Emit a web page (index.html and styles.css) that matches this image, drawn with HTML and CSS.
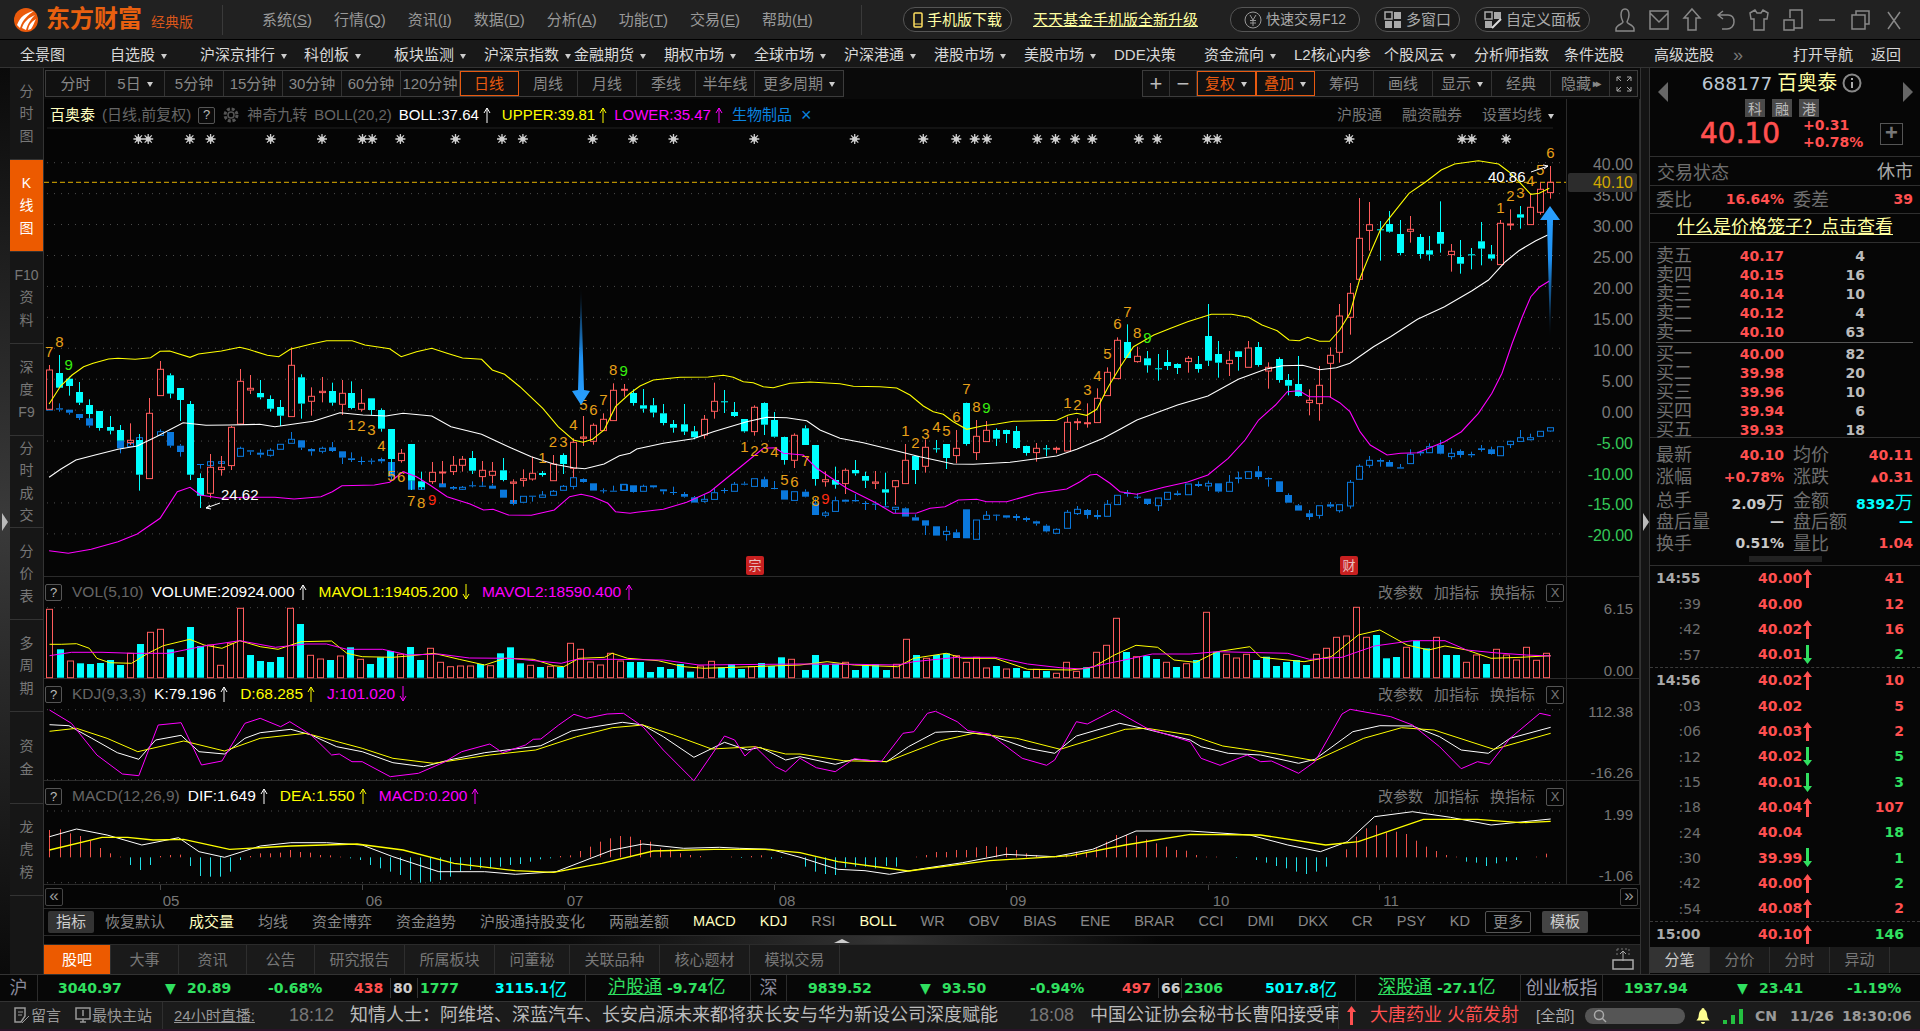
FILE: index.html
```html
<!DOCTYPE html>
<html lang="zh">
<head>
<meta charset="utf-8">
<title>东方财富 经典版</title>
<link rel="stylesheet" href="styles.css">
</head>
<body>
<svg class="defs" width="0" height="0">
  <symbol id="thin-up" viewBox="0 0 8 16"><path d="M4 16V1M1 6l3-5 3 5" fill="none" stroke="currentColor"/></symbol>
  <symbol id="thin-dn" viewBox="0 0 8 16"><path d="M4 0v15M1 10l3 5 3-5" fill="none" stroke="currentColor"/></symbol>
  <symbol id="tick-up" viewBox="0 0 9 19"><path d="M3 19V6H0L4.500 0 9 6H6v13z" fill="currentColor"/></symbol>
  <symbol id="tick-dn" viewBox="0 0 9 19"><path d="M3 0v13H0l4.500 6L9 13H6V0z" fill="currentColor"/></symbol>
</svg>

<header class="title">
  <div class="brand">
    <svg class="logo" viewBox="0 0 24 24"><circle cx="12" cy="12" r="12" fill="#ea5a0c"/><path d="M3 17C6 9 11 5 20 3 14 7 9 11 6 20zM8 20c2-6 6-10 13-13-4 4-7 8-9 15zM14 22c1-5 3-8 8-11-2 4-3 7-5 10z" fill="#fff"/></svg>
    <span class="brand-name">东方财富</span><span class="brand-ed">经典版</span>
  </div>
  <nav class="menu">
    <a>系统(<u>S</u>)</a><a>行情(<u>Q</u>)</a><a>资讯(<u>I</u>)</a><a>数据(<u>D</u>)</a><a>分析(<u>A</u>)</a><a>功能(<u>T</u>)</a><a>交易(<u>E</u>)</a><a>帮助(<u>H</u>)</a>
  </nav>
  <a class="pill pill-phone"><svg class="ic-phone" viewBox="0 0 10 16"><rect x="1" y="1" width="8" height="14" rx="1" fill="none" stroke="#ffe060" stroke-width="1.500"/><path d="M1 12h8" stroke="#ffe060"/></svg>手机版下载</a>
  <a class="promo">天天基金手机版全新升级</a>
  <a class="pill pill-trade"><svg class="ic-pill" viewBox="0 0 18 18"><circle cx="9" cy="9" r="8" fill="none" stroke="#999"/><path d="M6 4l3 5 3-5M9 9v6M6 9.500h6M6 12h6" fill="none" stroke="#999"/></svg>快速交易F12</a>
  <a class="pill pill-win"><svg class="ic-pill" viewBox="0 0 18 18" fill="#aaa"><rect x="1" y="1" width="7" height="7" fill="none" stroke="#aaa" stroke-width="1.500"/><rect x="10" y="1" width="7" height="7"/><rect x="1" y="10" width="7" height="7"/><rect x="10" y="10" width="7" height="7"/></svg>多窗口</a>
  <a class="pill pill-panel"><svg class="ic-pill" viewBox="0 0 18 18"><rect x="1" y="1" width="7" height="7" fill="none" stroke="#aaa" stroke-width="1.500"/><rect x="10" y="1" width="7" height="7" fill="#aaa"/><rect x="1" y="10" width="7" height="7" fill="#aaa"/><path d="M8 17l9-9" stroke="#ddd" stroke-width="2"/></svg>自定义面板</a>
  <div class="winbtns">
    <svg viewBox="0 0 22 26"><path d="M11 2c3 0 4 3 4 6s-1 5-2 7c0 2 7 3 7 7v2H2v-2c0-4 7-5 7-7-1-2-2-4-2-7s1-6 4-6z"/></svg>
    <svg viewBox="0 0 22 26"><path d="M2 4h18v18H2zM2 6l9 9 9-9"/></svg>
    <svg viewBox="0 0 22 26"><path d="M11 2l8 9h-4v12H7V11H3z"/></svg>
    <svg viewBox="0 0 22 26"><path d="M8 4L3 8l5 4M3 8h10c4 0 6 3 6 7s-3 7-7 7H7"/></svg>
    <svg viewBox="0 0 22 26"><path d="M7 3L2 6l1 6h3v11h10V12h3l1-6-5-3-2 3H9z"/></svg>
    <svg viewBox="0 0 22 26"><path d="M8 11V3h12v18h-8M2 13h10v10H2z"/></svg>
    <svg viewBox="0 0 22 26"><path d="M3 13h16"/></svg>
    <svg viewBox="0 0 22 26"><path d="M7 8V4h13v13h-4M3 8h13v14H3z"/></svg>
    <svg viewBox="0 0 22 26"><path d="M5 5l12 17M17 5L5 22"/></svg>
  </div>
</header>

<nav class="navbar">
  <a>全景图</a><a>自选股<i></i></a><a class="wide">沪深京排行<i></i></a><a>科创板<i></i></a><a>板块监测<i></i></a><a>沪深京指数<i></i></a><a>金融期货<i></i></a><a>期权市场<i></i></a><a>全球市场<i></i></a><a>沪深港通<i></i></a><a>港股市场<i></i></a><a>美股市场<i></i></a><a>DDE决策</a><a>资金流向<i></i></a><a>L2核心内参</a><a>个股风云<i></i></a><a>分析师指数</a><a>条件选股</a><a class="adv">高级选股</a><a class="more">»</a><a class="open">打开导航</a><a class="back">返回</a>
</nav>

<main class="workspace">
  <aside class="side">
    <div class="strip"><span class="grip"></span></div>
    <div class="sidetabs">
      <a><span>分<br>时<br>图</span></a><a class="on"><span>K<br>线<br>图</span></a><a><span>F10<br>资<br>料</span></a><a><span>深<br>度<br>F9</span></a><a><span>分<br>时<br>成<br>交</span></a><a><span>分<br>价<br>表</span></a><a><span>多<br>周<br>期</span></a><a><span>资<br>金</span></a><a><span>龙<br>虎<br>榜</span></a>
    </div>
  </aside>

  <section class="center">
    <div class="periodbar">
      <div class="pgroup">
        <a class="p1">分时</a><a>5日<i></i></a><a>5分钟</a><a>15分钟</a><a>30分钟</a><a>60分钟</a><a>120分钟</a><a class="act">日线</a><a>周线</a><a>月线</a><a>季线</a><a>半年线</a><a class="pmore">更多周期<i></i></a>
      </div>
      <div class="pgroup pright">
        <a class="sq">+</a><a class="sq">−</a><a class="act">复权<i></i></a><a class="act">叠加<i></i></a><a>筹码</a><a>画线</a><a>显示<i></i></a><a>经典</a><a>隐藏 <b class="dbl">▸▸</b></a>
        <a class="sq"><svg class="ic-expand" viewBox="0 0 16 16"><path d="M1 5V1h4M11 1h4v4M15 11v4h-4M5 15H1v-4M1 1l4 4M15 1l-4 4M15 15l-4-4M1 15l4-4" fill="none" stroke="#aaa"/></svg></a>
      </div>
    </div>

    <div class="panel panel-main">
      <svg id="chart-main" class="plot" viewBox="44 99 1596 478" width="1596" height="478"></svg>
      <div class="legend legend-main">
        <span class="stock">百奥泰</span><span class="mut">(日线,前复权)</span><span class="qbox">?</span>
        <svg class="ic-gear" viewBox="0 0 18 18"><circle cx="9" cy="9" r="6" fill="none" stroke="#555" stroke-width="3" stroke-dasharray="3 1.700"/><circle cx="9" cy="9" r="3" fill="none" stroke="#555" stroke-width="1.500"/></svg>
        <span class="mut">神奇九转</span><span class="mut">BOLL(20,2)</span>
        <span class="wh">BOLL:37.64<svg class="ar"><use href="#thin-up"/></svg></span>
        <span class="ye">UPPER:39.81<svg class="ar"><use href="#thin-up"/></svg></span>
        <span class="ma">LOWER:35.47<svg class="ar"><use href="#thin-up"/></svg></span>
        <span class="bl">生物制品</span><span class="bl bx">×</span>
        <span class="legend-tools"><a>沪股通</a><a>融资融券</a><a>设置均线<i></i></a></span>
      </div>
      <span class="mark mark-a">宗</span><span class="mark mark-b">财</span>
      <span class="price-tag">40.10</span>
    </div>

    <div class="panel panel-sub">
      <svg id="chart-vol" class="plot" viewBox="44 577 1596 102" width="1596" height="102"></svg>
      <div class="legend legend-sub">
        <span class="qbox">?</span><span class="mut">VOL(5,10)</span>
        <span class="wh">VOLUME:20924.000<svg class="ar"><use href="#thin-up"/></svg></span>
        <span class="ye">MAVOL1:19405.200<svg class="ar"><use href="#thin-dn"/></svg></span>
        <span class="ma">MAVOL2:18590.400<svg class="ar"><use href="#thin-up"/></svg></span>
        <span class="legend-tools"><a>改参数</a><a>加指标</a><a>换指标</a><b class="xbox">X</b></span>
      </div>
    </div>
    <div class="panel panel-sub">
      <svg id="chart-kdj" class="plot" viewBox="44 679 1596 102" width="1596" height="102"></svg>
      <div class="legend legend-sub">
        <span class="qbox">?</span><span class="mut">KDJ(9,3,3)</span>
        <span class="wh">K:79.196<svg class="ar"><use href="#thin-up"/></svg></span>
        <span class="ye">D:68.285<svg class="ar"><use href="#thin-up"/></svg></span>
        <span class="ma">J:101.020<svg class="ar"><use href="#thin-dn"/></svg></span>
        <span class="legend-tools"><a>改参数</a><a>加指标</a><a>换指标</a><b class="xbox">X</b></span>
      </div>
    </div>
    <div class="panel panel-macd">
      <svg id="chart-macd" class="plot" viewBox="44 781 1596 104" width="1596" height="104"></svg>
      <div class="legend legend-sub">
        <span class="qbox">?</span><span class="mut">MACD(12,26,9)</span>
        <span class="wh">DIF:1.649<svg class="ar"><use href="#thin-up"/></svg></span>
        <span class="ye">DEA:1.550<svg class="ar"><use href="#thin-up"/></svg></span>
        <span class="ma">MACD:0.200<svg class="ar"><use href="#thin-up"/></svg></span>
        <span class="legend-tools"><a>改参数</a><a>加指标</a><a>换指标</a><b class="xbox">X</b></span>
      </div>
    </div>

    <div class="panel panel-axis">
      <svg id="chart-axis" class="plot" viewBox="44 885 1596 24" width="1596" height="24"></svg>
      <a class="scroll scroll-l">«</a><a class="scroll scroll-r">»</a>
    </div>

    <div class="indicators">
      <a class="ind-on">指标</a><a>恢复默认</a><a class="hl">成交量</a><a>均线</a><a>资金博弈</a><a>资金趋势</a><a>沪股通持股变化</a><a>两融差额</a><a class="hl lat">MACD</a><a class="hl lat">KDJ</a><a class="lat">RSI</a><a class="hl lat">BOLL</a><a class="lat">WR</a><a class="lat">OBV</a><a class="lat">BIAS</a><a class="lat">ENE</a><a class="lat">BRAR</a><a class="lat">CCI</a><a class="lat">DMI</a><a class="lat">DKX</a><a class="lat">CR</a><a class="lat">PSY</a><a class="lat">KD</a><a class="ind-more">更多</a><a class="ind-tpl">模板</a>
    </div>
    <div class="handle"><span></span></div>
    <div class="tabs">
      <a class="on t67">股吧</a><a class="t68">大事</a><a class="t68">资讯</a><a class="t68">公告</a><a class="t90">研究报告</a><a class="t90">所属板块</a><a class="t75">问董秘</a><a class="t90">关联品种</a><a class="t90">核心题材</a><a class="t90">模拟交易</a>
      <svg class="ic-export" viewBox="0 0 22 22"><path d="M5 1h12v8M5 1v8" fill="none" stroke="#777" stroke-dasharray="2 2"/><path d="M11 13V3M8 6l3-3 3 3" fill="none" stroke="#aaa"/><rect x="1" y="12" width="20" height="9" fill="none" stroke="#aaa" stroke-width="1.500"/></svg>
    </div>
  </section>

  <div class="divider"><span class="grip"></span></div>

  <aside class="quote">
    <div class="q-head">
      <span class="tri tri-l"></span><span class="tri tri-r"></span>
      <div class="q-name"><span class="q-code">688177</span><span class="q-stock">百奥泰</span><svg class="ic-info" viewBox="0 0 20 20"><circle cx="10" cy="10" r="8.500" fill="none" stroke="#888" stroke-width="2"/><path d="M10 5v2M10 9v6" stroke="#aaa" stroke-width="2"/></svg></div>
      <div class="q-tags"><b>科</b><b>融</b><b>港</b></div>
      <div class="q-price"><span class="q-big">40.10</span><span class="q-chg">+0.31<br>+0.78%</span><span class="q-add">+</span></div>
    </div>
    <div class="q-state"><span class="lbl">交易状态</span><span class="rest">休市</span></div>
    <div class="q-ratio statrow"><span class="lbl">委比</span><b class="r">16.64%</b><span class="lbl l2">委差</span><b class="r">39</b></div>
    <a class="q-link">什么是价格笼子？点击查看</a>
    <div class="book">
      <div class="brow"><span class="lbl">卖五</span><b class="r">40.17</b><b>4</b></div>
      <div class="brow"><span class="lbl">卖四</span><b class="r">40.15</b><b>16</b></div>
      <div class="brow"><span class="lbl">卖三</span><b class="r">40.14</b><b>10</b></div>
      <div class="brow"><span class="lbl">卖二</span><b class="r">40.12</b><b>4</b></div>
      <div class="brow"><span class="lbl">卖一</span><b class="r">40.10</b><b>63</b></div>
      <hr class="book-sep">
      <div class="brow"><span class="lbl">买一</span><b class="r">40.00</b><b>82</b></div>
      <div class="brow"><span class="lbl">买二</span><b class="r">39.98</b><b>20</b></div>
      <div class="brow"><span class="lbl">买三</span><b class="r">39.96</b><b>10</b></div>
      <div class="brow"><span class="lbl">买四</span><b class="r">39.94</b><b>6</b></div>
      <div class="brow"><span class="lbl">买五</span><b class="r">39.93</b><b>18</b></div>
    </div>
    <div class="stats">
      <div class="statrow"><span class="lbl">最新</span><b class="r">40.10</b><span class="lbl l2">均价</span><b class="r">40.11</b></div>
      <div class="statrow"><span class="lbl">涨幅</span><b class="r">+0.78%</b><span class="lbl l2">涨跌</span><b class="r"><small>▲</small>0.31</b></div>
      <div class="statrow"><span class="lbl">总手</span><b class="g">2.09<em>万</em></b><span class="lbl l2">金额</span><b class="cy">8392<em>万</em></b></div>
      <div class="statrow"><span class="lbl lw">盘后量</span><b class="g">—</b><span class="lbl l2 lw">盘后额</span><b class="cy">—</b></div>
      <div class="statrow"><span class="lbl">换手</span><b class="g">0.51%</b><span class="lbl l2">量比</span><b class="r">1.04</b></div>
    </div>
    <div class="q-grip"><span></span></div>
    <div class="ticks">
      <div class="tgroup">
        <div class="trow"><b class="tm">14:55</b><b class="r">40.00<svg class="ta r"><use href="#tick-up"/></svg></b><b class="r v">41</b></div>
        <div class="trow"><span class="ts">:39</span><b class="r">40.00</b><b class="r v">12</b></div>
        <div class="trow"><span class="ts">:42</span><b class="r">40.02<svg class="ta r"><use href="#tick-up"/></svg></b><b class="r v">16</b></div>
        <div class="trow"><span class="ts">:57</span><b class="r">40.01<svg class="ta gn"><use href="#tick-dn"/></svg></b><b class="gn v">2</b></div>
      </div>
      <div class="tgroup">
        <div class="trow"><b class="tm">14:56</b><b class="r">40.02<svg class="ta r"><use href="#tick-up"/></svg></b><b class="r v">10</b></div>
        <div class="trow"><span class="ts">:03</span><b class="r">40.02</b><b class="r v">5</b></div>
        <div class="trow"><span class="ts">:06</span><b class="r">40.03<svg class="ta r"><use href="#tick-up"/></svg></b><b class="r v">2</b></div>
        <div class="trow"><span class="ts">:12</span><b class="r">40.02<svg class="ta gn"><use href="#tick-dn"/></svg></b><b class="gn v">5</b></div>
        <div class="trow"><span class="ts">:15</span><b class="r">40.01<svg class="ta gn"><use href="#tick-dn"/></svg></b><b class="gn v">3</b></div>
        <div class="trow"><span class="ts">:18</span><b class="r">40.04<svg class="ta r"><use href="#tick-up"/></svg></b><b class="r v">107</b></div>
        <div class="trow"><span class="ts">:24</span><b class="r">40.04</b><b class="gn v">18</b></div>
        <div class="trow"><span class="ts">:30</span><b class="r">39.99<svg class="ta gn"><use href="#tick-dn"/></svg></b><b class="gn v">1</b></div>
        <div class="trow"><span class="ts">:42</span><b class="r">40.00<svg class="ta r"><use href="#tick-up"/></svg></b><b class="gn v">2</b></div>
        <div class="trow"><span class="ts">:54</span><b class="r">40.08<svg class="ta r"><use href="#tick-up"/></svg></b><b class="r v">2</b></div>
      </div>
      <div class="tgroup tlast">
        <div class="trow"><b class="tm">15:00</b><b class="r">40.10<svg class="ta r"><use href="#tick-up"/></svg></b><b class="gn v">146</b></div>
      </div>
    </div>
    <div class="q-tabs"><a class="on">分笔</a><a>分价</a><a>分时</a><a>异动</a></div>
  </aside>
</main>

<div class="indexbar">
  <span class="ix-name">沪</span>
  <b class="ix-price g1">3040.97</b><b class="ix-arrow">▼</b><b class="ix-chg">20.89</b><b class="ix-pct">-0.68%</b>
  <b class="ix-up">438</b><b class="ix-flat">80</b><b class="ix-dn">1777</b><b class="ix-amt">3115.1<em>亿</em></b>
  <span class="ix-tong"><u>沪股通</u> <b>-9.74</b>亿</span>
  <span class="ix-name n2">深</span>
  <b class="ix-price g2">9839.52</b><b class="ix-arrow">▼</b><b class="ix-chg c2">93.50</b><b class="ix-pct p2">-0.94%</b>
  <b class="ix-up">497</b><b class="ix-flat f2">66</b><b class="ix-dn d2">2306</b><b class="ix-amt">5017.8<em>亿</em></b>
  <span class="ix-tong"><u>深股通</u> <b>-27.1</b>亿</span>
  <span class="ix-name n3">创业板指</span>
  <b class="ix-price g3">1937.94</b><b class="ix-arrow">▼</b><b class="ix-chg c2">23.41</b><b class="ix-pct">-1.19%</b>
</div>

<footer class="status">
  <a class="st-tool"><svg viewBox="0 0 16 18"><path d="M1 1h10v8L7 15H1z" fill="none" stroke="#999" stroke-width="1.500"/><path d="M4 5h5M4 8h4M8 16l7-7" stroke="#999"/></svg>留言</a>
  <a class="st-tool st-tool2"><svg viewBox="0 0 16 18"><rect x="1" y="1" width="14" height="11" fill="none" stroke="#999" stroke-width="1.500"/><path d="M8 3v6M5 15h6M8 12v3" stroke="#999" stroke-width="1.500"/></svg>最快主站</a>
  <a class="st-live">24小时直播:</a>
  <span class="st-time">18:12</span><span class="st-news n-a">知情人士：阿维塔、深蓝汽车、长安启源未来都将获长安与华为新设公司深度赋能</span>
  <span class="st-time">18:08</span><span class="st-news n-b">中国公证协会秘书长曹阳接受审</span>
  <span class="st-alert"><svg class="ta"><use href="#tick-up"/></svg>大唐药业 火箭发射</span>
  <a class="st-all">[全部]</a>
  <span class="st-search"><svg viewBox="0 0 14 14"><circle cx="6" cy="6" r="4.500" fill="none" stroke="#aaa" stroke-width="1.500"/><path d="M9 9l4 4" stroke="#aaa" stroke-width="1.500"/></svg></span>
  <svg class="st-bell" viewBox="0 0 16 16"><path d="M8 0c1 0 1.500 1 1.500 1.500C12 3 12 6 12.500 9c.300 2 2 3 2 3.500H1.500C1.500 12 3.200 11 3.500 9 4 6 4 3 6.500 1.500 6.500 1 7 0 8 0zM6 14h4c0 1-1 2-2 2s-2-1-2-2z" fill="#ffff90"/></svg>
  <svg class="st-signal" viewBox="0 0 21 16" fill="#24c040"><rect x="0" y="12" width="4" height="4"/><rect x="8" y="7" width="4" height="9"/><rect x="16" y="1" width="4" height="15"/></svg>
  <b class="st-clock c1">CN</b><b class="st-clock c2">11/26</b><b class="st-clock c3">18:30:06</b>
</footer>
<script src="chart.js"></script>
</body>
</html>
```

FILE: styles.css
```css
* { box-sizing: border-box; }
html, body { margin: 0; height: 1031px; overflow: hidden; }
body {
  width: 1920px;
  background: #2a1428;
  color: #aaa;
  font: 15px/1.2 "Liberation Sans", "Noto Sans CJK SC", sans-serif;
}
a { color: inherit; text-decoration: none; }
.defs { position: absolute; }

/* title bar */
.title { height: 40px; background: #212121; display: flex; align-items: center; border-bottom: 1px solid #000; }
.brand { width: 223px; display: flex; align-items: center; padding-left: 14px; height: 30px; border-right: 1px solid #3a3a3a; }
.logo { width: 24px; height: 24px; }
.brand-name { margin-left: 8px; font-size: 24px; font-weight: 700; color: #e9600f; letter-spacing: 0; }
.brand-ed { margin-left: 9px; font-size: 14px; color: #d9561a; margin-top: 6px; }
.menu { width: 639px; height: 30px; display: flex; gap: 22px; align-items: center; padding-left: 39px; color: #999; border-right: 1px solid #3a3a3a; }
.pill { height: 25px; border: 1px solid #555; border-radius: 12px; display: flex; align-items: center; justify-content: center; gap: 4px; color: #aaa; background: #1b1b1b; }
.pill-phone { width: 109px; margin-left: 41px; color: #ffffa8; }
.ic-phone { width: 10px; height: 16px; }
.ic-pill { width: 18px; height: 18px; }
.promo { width: 165px; margin-left: 21px; color: #ffffa0; text-decoration: underline; white-space: nowrap; }
.pill-trade { width: 130px; margin-left: 32px; font-size: 14px; }
.pill-win { width: 85px; margin-left: 15px; }
.pill-panel { width: 115px; margin-left: 15px; }
.winbtns { display: flex; margin-left: 24px; gap: 11.600px; }
.winbtns svg { width: 22px; height: 26px; fill: none; stroke: #888; stroke-width: 1.500; }

/* nav */
.navbar { height: 28px; background: #181818; display: flex; align-items: center; padding: 3px 0 0 20px; color: #d8d8d8; border-bottom: 1px solid #333; white-space: nowrap; }
.navbar a { flex: 0 0 90px; }
.navbar a.wide { flex-basis: 104px; }
.navbar a.adv { flex-basis: 79px; }
.navbar a.more { flex-basis: 60px; color: #777; font-size: 18px; line-height: 18px; }
.navbar a.open { flex-basis: 78px; }
i { display: inline-block; width: 0; height: 0; margin-left: 6px; vertical-align: middle; border: 3px solid transparent; border-top: 5px solid #ccc; border-bottom: 0; }

/* workspace */
.workspace { height: 906px; display: flex; background: #050505; }
.side { width: 44px; display: flex; border-right: 1px solid #333; }
.strip, .divider { width: 10px; background: linear-gradient(#0a0a0a, #3a3a3a 50%, #0a0a0a); position: relative; flex: none; }
.divider { background: #141414; border-left: 1px solid #333; border-right: 1px solid #333; }
.grip { position: absolute; left: 2px; top: 445px; width: 0; height: 0; border-left: 6px solid #bbb; border-top: 9px solid transparent; border-bottom: 9px solid transparent; }
.sidetabs { flex: 1; background: #161616; }
.sidetabs a { height: 92px; display: flex; align-items: center; justify-content: center; text-align: center; font-size: 14px; line-height: 22.500px; color: #777; border-bottom: 1px solid #333; }
.sidetabs a.on { background: #ec5a00; color: #fff; }

.center { width: 1596px; display: flex; flex-direction: column; }
.periodbar { height: 31px; display: flex; justify-content: space-between; padding: 2px 2px 2px 1px; background: #0a0a0a; }
.pgroup { display: flex; border: 1px solid #3c3c3c; background: #111; height: 27px; }
.pgroup a { width: 59px; display: flex; align-items: center; justify-content: center; padding-top: 1px; color: #888; border-right: 1px solid #333; white-space: nowrap; font-size: 15px; }
.pgroup a:last-child { border-right: 0; }
.pgroup a.p1 { width: 60px; }
.pgroup a.pmore { width: 88px; }
.pgroup a.act { color: #e85a10; outline: 1px solid #e85a10; outline-offset: -1px; }
.pgroup a.sq { width: 27px; color: #bbb; font-size: 22px; }
.dbl { font-size: 10px; margin-left: 2px; letter-spacing: -2px; }
.ic-expand { width: 16px; height: 16px; }

.panel { position: relative; border-bottom: 1px solid #2b2b2b; flex: none; }
.panel-main { height: 478px; }
.panel-sub { height: 102px; }
.panel-macd { height: 104px; }
.panel-axis { height: 24px; }
.plot { display: block; position: absolute; left: 0; top: 0; overflow: visible; }
.legend { position: absolute; left: 1px; right: 76px; display: flex; align-items: center; white-space: nowrap; }
.legend-main { top: 7px; left: 6px; gap: 7px; right: 86px; height: 18px; }
.legend-sub { top: 6px; gap: 8px; height: 19px; font-size: 15.500px; }
.legend-sub .qbox { margin-right: 2px; }
.legend-sub .legend-tools { font-size: 15px; }
.qbox { width: 17px; height: 17px; border: 1px solid #555; border-radius: 2px; display: inline-flex; align-items: center; justify-content: center; color: #bbb; font-size: 13px; background: #0a0a0a; }
.mut { color: #666; }
.wh { color: #fff; }
.ye { color: #ff0; margin-left: 4px; }
.ma { color: #f0f; margin-left: 4px; }
.legend-main .ma { margin-left: 0; }
.bl { color: #0a84e0; }
.legend-main .bl { margin-left: 2px; }
.bx { font-size: 18px; line-height: 16px; }
.stock { color: #ffffc0; }
.ar { width: 8px; height: 16px; margin-left: 4px; vertical-align: -3px; }
.ic-gear { width: 18px; height: 18px; }
.legend-tools { margin-left: auto; display: flex; align-items: center; gap: 11px; color: #777; }
.legend-main .legend-tools { gap: 20px; }
.xbox { width: 18px; height: 18px; border: 1px solid #555; border-radius: 2px; display: flex; align-items: center; justify-content: center; color: #777; font-weight: 400; font-size: 13px; }
.mark { position: absolute; top: 457px; width: 18px; height: 19px; background: #c82020; border-radius: 2px; color: #e8c0c0; font-size: 13px; text-align: center; line-height: 19px; }
.mark-a { left: 702px; }
.mark-b { left: 1296px; }
.price-tag { position: absolute; left: 1524px; top: 74px; width: 69px; height: 19px; background: #2c2c2c; color: #d4a800; font-size: 16px; line-height: 19px; text-align: right; padding-right: 4px; border-radius: 2px; }

.scroll { position: absolute; top: 3px; width: 18px; height: 18px; border: 1px solid #444; border-radius: 2px; color: #999; font-size: 17px; line-height: 14px; text-align: center; }
.scroll-l { left: 1px; }
.scroll-r { right: 2px; }

.indicators { height: 27px; display: flex; align-items: center; gap: 24px; padding-left: 4px; color: #888; white-space: nowrap; border-bottom: 1px solid #2b2b2b; }
.indicators a { flex: none; }
.indicators .lat { font-size: 14.500px; }
.indicators .ind-on { width: 46px; height: 22px; margin-right: -13px; background: #333; color: #ccc; text-align: center; line-height: 22px; border-radius: 2px; }
.indicators .hl { color: #ffffc0; }
.indicators .ind-more { width: 46px; height: 22px; margin-left: -9px; margin-right: -13px; border: 1px solid #555; text-align: center; line-height: 20px; border-radius: 2px; }
.indicators .ind-tpl { width: 46px; height: 22px; background: #444; color: #ccc; text-align: center; line-height: 22px; border-radius: 2px; }
.handle { height: 9px; display: flex; justify-content: center; align-items: flex-end; background: linear-gradient(90deg, #050505 30%, #333 53%, #050505 70%); border-bottom: 1px solid #2b2b2b; }
.handle span { width: 0; height: 0; border: 8px solid transparent; border-top: 0; border-bottom: 4px solid #ccc; margin-bottom: 1px; }
.tabs { height: 29px; display: flex; background: #1a1a1a; color: #777; position: relative; }
.tabs a { display: flex; align-items: center; justify-content: center; border-right: 1px solid #2e2e2e; }
.tabs .t67 { width: 67px; } .tabs .t68 { width: 68px; } .tabs .t75 { width: 75px; } .tabs .t90 { width: 90px; }
.tabs a.on { background: #ec5a00; color: #fff; }
.ic-export { width: 22px; height: 22px; margin-left: auto; margin-right: 6px; margin-top: 3px; }

/* quote panel */
.quote { width: 270px; background: #060606; display: flex; flex-direction: column; color: #bbb; }
.quote b { font-family: "DejaVu Sans", "Noto Sans CJK SC", sans-serif; font-size: 14px; }
.r { color: #ff5050; } .g { color: #c8c8c8; } .cy { color: #0ff; } .gn { color: #30e060; }
.lbl { font-size: 18px; color: #6e6e6e; line-height: 20px; white-space: nowrap; }
.q-head { height: 89px; position: relative; border-bottom: 1px solid #2f2f2f; text-align: center; }
.tri { position: absolute; top: 14px; width: 0; height: 0; border-top: 10px solid transparent; border-bottom: 10px solid transparent; }
.tri-l { left: 8px; border-right: 10px solid #666; }
.tri-r { right: 7px; border-left: 10px solid #666; }
.q-name { display: flex; justify-content: center; align-items: center; height: 30px; padding-right: 6px; }
.q-code { font: 18.500px "DejaVu Sans", sans-serif; color: #bcc8d4; }
.q-stock { font-size: 20px; color: #ffffa0; margin: 0 5px; }
.ic-info { width: 20px; height: 20px; }
.q-tags { display: flex; justify-content: center; gap: 7px; height: 19px; padding: 1px 6px 0 0; }
.q-tags b { font: 14px/18px "Noto Sans CJK SC", sans-serif; width: 20px; height: 18px; background: #4a4a4a; color: #bbb; }
.q-price { display: flex; align-items: flex-start; height: 37px; padding-left: 50px; text-align: left; }
.q-big { font: 28px/34px "DejaVu Sans", sans-serif; -webkit-text-stroke: .6px #ff5050; color: #ff5050; width: 103px; }
.quote .q-chg { font: 700 14px/17px "DejaVu Sans", sans-serif; color: #ff5050; width: 77px; }
.q-add { width: 23px; height: 22px; margin-top: 6px; border: 1px solid #555; color: #777; font-size: 22px; line-height: 18px; text-align: center; font-weight: 700; }
.q-state { height: 29px; display: flex; justify-content: space-between; align-items: center; padding: 3px 7px 0 7px; border-bottom: 1px solid #2f2f2f; }
.rest { font-size: 18px; color: #aaa; }
.statrow { display: grid; grid-template-columns: 54px 74px 9px 50px 70px; align-items: center; padding-left: 6px; }
.statrow .lbl { grid-column: 1; overflow: visible; }
.statrow .l2 { grid-column: 4; }
.statrow > b { text-align: right; }
.statrow em { font: 18px "Noto Sans CJK SC", sans-serif; }
.statrow small { font-size: 10px; vertical-align: 1px; }
.q-ratio { height: 28px; border-bottom: 1px solid #2f2f2f; }
.q-link { height: 29px; display: block; text-align: center; font-size: 18px; line-height: 27px; color: #ffffa0; text-decoration: underline; border-bottom: 1px solid #2f2f2f; }
.book { height: 195px; padding-top: 3px; border-bottom: 1px solid #2f2f2f; }
.brow { display: grid; grid-template-columns: 50px 78px 81px; height: 19px; align-items: center; padding-left: 6px; }
.brow b { text-align: right; }
.book-sep { border: 0; border-top: 1px solid #555; margin: 1px 7px 1px 6px; height: 0; }
.stats { height: 118px; padding-top: 6px; }
.stats .statrow { height: 22.200px; }
.q-grip { height: 10px; border-bottom: 1px solid #2f2f2f; display: flex; justify-content: center; align-items: flex-start; }
.q-grip span { width: 73px; height: 6px; background: #222; }
.ticks { height: 381px; }
.tgroup { border-bottom: 1px dashed #3a3a3a; }
.tlast { border-bottom: 0; }
.trow { display: grid; grid-template-columns: 45px 57px 60px 86px; height: 25.300px; align-items: center; padding-left: 6px; }
.trow > :nth-child(2) { grid-column: 3; display: flex; align-items: center; white-space: nowrap; }
.trow .v { text-align: right; }
.quote b.tm { color: #aaa; }
.ts { font: 14px "DejaVu Sans", sans-serif; color: #6e6e6e; text-align: right; }
.ta { width: 9px; height: 19px; margin-left: 1px; flex: none; }
.q-tabs { height: 26px; display: flex; background: #1a1a1a; color: #777; }
.q-tabs a { width: 60px; text-align: center; line-height: 26px; border-right: 1px solid #2e2e2e; }
.q-tabs a.on { background: #333; color: #ccc; }

/* index bar */
.indexbar { height: 28px; background: #070707; border-top: 1px solid #333; border-bottom: 1px solid #333; display: flex; align-items: center; white-space: nowrap; }
.indexbar b { font: 700 14px "DejaVu Sans", sans-serif; flex: none; color: #30e060; }
.ix-name { font-size: 18px; color: #889; text-align: center; width: 38px; height: 26px; line-height: 26px; flex: none; border-right: 1px solid #2c2c2c; }
.ix-name.n2 { width: 37px; border-left: 1px solid #2c2c2c; }
.ix-name.n3 { width: 83px; border-left: 1px solid #2c2c2c; color: #99a; }
.indexbar .ix-price { width: 107px; margin-left: 20px; }
.indexbar .ix-price.g2 { width: 112px; margin-left: 21px; }
.indexbar .ix-price.g3 { width: 113px; margin-left: 21px; }
.ix-arrow { width: 22px; }
.ix-chg { width: 81px; }
.ix-chg.c2 { width: 88px; }
.ix-pct { width: 86px; }
.ix-pct.p2 { width: 92px; }
.indexbar .ix-up { width: 36px; color: #ff5050; }
.indexbar .ix-flat { width: 28px; color: #ccc; border-left: 1px solid #333; border-right: 1px solid #333; padding-left: 2px; margin-right: 2px; height: 20px; line-height: 20px; }
.indexbar .f2 { width: 24px; }
.ix-dn { width: 75px; }
.ix-dn.d2 { width: 81px; }
.indexbar .ix-amt { width: 91px; color: #0ff; border-right: 1px solid #2c2c2c; height: 26px; display: flex; align-items: center; }
.indexbar em { font: 18px/1 "Noto Sans CJK SC", sans-serif; }
.ix-tong { width: 164px; padding-left: 22px; color: #30e060; font-size: 18px; flex: none; }
.indexbar .ix-tong b { font-size: 14px; }

/* status bar */
.status { height: 27px; background: #1b1b1b; display: flex; align-items: center; white-space: nowrap; color: #999; font-size: 15px; }
.st-tool { display: flex; align-items: center; margin-left: 14px; gap: 1px; }
.st-tool svg { width: 16px; height: 18px; }
.st-tool2 { width: 88px; height: 27px; border-right: 1px solid #2f2f2f; }
.st-live { margin-left: 11px; width: 115px; text-decoration: underline; }
.st-time { font-size: 18px; color: #777; flex: none; width: 61px; }
.st-news { font-size: 18px; color: #bbb; overflow: hidden; flex: none; }
.n-a { width: 679px; }
.n-b { width: 249px; height: 27px; line-height: 27px; border-right: 1px solid #2f2f2f; }
.st-alert { width: 197px; padding-left: 7px; color: #ff5050; font-size: 18px; display: flex; align-items: center; flex: none; gap: 14px; }
.st-all { width: 49px; color: #aaa; }
.st-search { width: 100px; height: 16px; background: #555; border-radius: 8px; padding: 1px 8px; flex: none; }
.st-search svg { width: 14px; height: 14px; display: block; }
.st-bell { width: 16px; height: 16px; margin-left: 10px; flex: none; }
.st-signal { width: 21px; height: 16px; margin-left: 12px; flex: none; }
.st-clock { font: 700 14px "DejaVu Sans", sans-serif; color: #999; flex: none; }
.st-clock.c1 { margin-left: 11px; }
.st-clock.c2 { margin-left: 13px; }
.st-clock.c3 { margin-left: 8px; }

/* chart text */
.axis { font: 16px "Liberation Sans", sans-serif; fill: #7a7a7a; text-anchor: end; }
.axis-g { fill: #34c858; }
.axis-k { font: 15px "Liberation Sans", sans-serif; fill: #777; text-anchor: end; }
.td { font: 15px "Liberation Sans", sans-serif; text-anchor: middle; fill: #e8a018; }
.td-g { fill: #38f010; }
.td-r { fill: #ff2a10; }
.note { font: 15px "Liberation Sans", sans-serif; fill: #fff; }
.month { font: 15px "Liberation Sans", sans-serif; fill: #777; text-anchor: middle; }
```

FILE: chart.js
```javascript
(function () {
  var X7 = function (z) { return 30 + z / 2.613; };
  var X8 = function (z) { return 620 + z / 3; };
  var X9 = function (z) { return 1120 + z / 2.958; };
  var Y7 = function (z) { return 280 + z / 3; };
  var Y9 = function (z) { return 130 + z / 3; };
  var XA = function (z) { return z / 1.96; };
  var XB = function (z) { return 800 + z / 1.845; };
  var YS = function (z) { return 570 + z / 3; };

  var RED = '#ff5c5c', CY = '#00ffff', BL = '#0a78dc', YE = '#ffff00', MA = '#ff00ff', WH = '#ffffff';

  /* [x, high, top, bottom, low, isRed] */
  var C1 = [[50,255,270,388,390,1],[77,225,279,323,323,0],[103,290,296,318,347,0],[129,306,336,368,375,0],[155,358,375,402,415,0],[181,393,393,444,452,0],[208,408,441,452,463,0],[234,435,450,482,482,0],[260,430,481,488,495,1],[286,462,480,584,632,0],[312,354,400,596,596,1],[339,243,268,347,347,1],[365,280,286,341,355,0],[392,324,324,360,423,0],[419,363,372,584,600,0],[445,580,594,647,684,0],[471,522,562,640,655,1],[498,528,562,569,587,1],[524,438,442,557,570,1],[550,267,304,432,434,1],[576,285,325,330,342,1],[602,300,339,352,358,0],[628,346,357,386,395,0],[654,360,381,407,438,0],[681,202,256,410,410,1],[709,283,292,371,416,0],[735,322,349,364,407,1],[762,291,334,338,367,1],[788,308,333,368,377,0],[814,300,340,373,405,1],[840,304,339,384,388,0],[866,327,370,388,395,1],[892,355,355,390,405,0],[918,385,390,446,455,0],[944,447,447,537,580,0],[970,507,520,542,548,1],[996,492,492,602,630,0],[1022,575,604,622,628,0],[1051,546,577,605,612,1],[1077,543,576,578,612,1],[1104,528,556,575,585,1],[1130,528,538,556,575,1],[1156,513,534,572,582,0],[1182,543,571,590,605,1],[1208,546,574,586,610,1],[1235,534,571,600,604,0],[1261,598,606,610,668,1],[1287,568,596,601,620,1],[1313,530,580,597,602,1],[1339,573,579,585,590,0],[1366,525,552,602,602,1],[1394,520,525,552,582,0],[1420,475,487,565,592,1],[1446,408,471,475,498,1],[1472,430,436,484,494,1],[1498,400,418,452,452,1],[1524,310,331,422,422,1],[1551,312,328,328,350,1]];
  var C2 = [[40,328,339,369,377,0],[70,327,376,386,398,0],[100,354,376,398,412,0],[130,372,400,429,436,0],[160,420,432,443,458,0],[193,372,433,455,465,0],[223,438,454,472,478,0],[253,405,418,465,476,1],[283,308,364,394,416,1],[313,330,364,365,399,0],[343,366,396,408,411,0],[373,417,417,454,458,0],[403,376,382,455,467,1],[433,367,369,434,465,0],[463,396,420,470,473,0],[493,470,471,540,554,0],[523,460,466,541,564,1],[556,436,445,495,495,0],[586,495,495,597,617,0],[616,574,599,605,620,1],[646,560,600,614,626,0],[676,565,571,611,642,1],[706,540,570,580,587,0],[736,575,588,602,624,0],[766,573,606,610,627,1],[796,578,628,638,675,0],[826,600,602,620,675,1],[856,492,541,611,611,1],[886,528,528,570,612,0],[916,478,502,559,578,1],[949,480,505,507,518,0],[979,492,492,534,567,0],[1009,450,505,527,550,1],[1039,368,369,492,497,0],[1069,420,469,518,540,1],[1099,423,451,485,485,1],[1129,445,450,476,498,0],[1159,449,450,462,489,0],[1189,438,453,504,507,0],[1219,497,498,519,527,0],[1249,489,505,518,545,1],[1279,495,505,507,529,0],[1309,500,505,508,520,1],[1342,410,427,513,513,1],[1372,415,425,428,450,1],[1402,370,428,430,443,1],[1432,325,355,428,428,1],[1462,262,277,347,347,1],[1492,172,181,296,296,1]];
  var C3 = [[22,583,636,684,684,0],[51,650,679,695,698,1],[81,663,685,706,728,0],[111,672,715,716,752,0],[140,660,696,708,720,0],[170,700,702,714,732,0],[202,678,685,695,728,1],[232,678,702,717,728,0],[261,522,618,692,708,0],[291,633,672,698,743,0],[321,663,691,701,738,1],[350,663,664,681,722,0],[380,633,654,712,712,1],[409,636,651,705,710,0],[439,697,712,723,776,1],[469,682,687,750,758,0],[498,732,750,767,796,0],[528,678,762,798,800,0],[558,778,811,818,856,1],[590,708,766,821,872,1],[620,652,676,700,802,1],[649,522,558,667,698,1],[679,459,490,562,614,1],[708,204,325,448,448,1],[738,216,284,301,362,1],[768,273,298,299,392,0],[797,243,282,305,308,0],[827,270,312,369,376,0],[857,258,298,304,338,1],[886,312,321,372,386,0],[914,318,361,374,392,0],[948,214,306,341,368,0],[978,342,364,374,425,1],[1007,330,381,401,431,0],[1037,354,373,375,418,0],[1067,276,334,356,406,0],[1096,345,373,386,392,0],[1125,270,280,404,404,1],[1155,238,282,284,300,1],[1184,228,253,263,296,0],[1214,190,232,284,284,1],[1243,157,178,247,254,1],[1273,108,157,188,206,1]];

  /* lower blue candles: [x, high, top, bottom, low, filled] */
  var B1 = [[50,388,388,392,392,1],[77,370,385,389,395,1],[103,389,389,398,404,1],[129,402,402,414,420,1],[155,415,415,437,443,1],[234,482,482,505,520,1],[260,490,490,500,500,0],[286,473,473,482,482,0],[339,448,455,466,466,0],[365,456,456,497,503,1],[392,492,497,516,530,1],[445,552,552,555,566,1],[471,545,545,556,556,0],[498,545,545,550,550,0],[550,500,505,529,529,0],[576,511,511,515,525,1],[602,508,518,524,533,1],[628,505,511,526,530,0],[654,493,493,508,508,0],[681,456,478,490,490,0],[709,481,481,503,510,1],[735,505,507,514,527,1],[762,500,505,514,520,0],[788,486,502,513,516,1],[814,514,514,533,552,1],[840,517,535,540,546,1],[866,530,543,545,554,1],[892,535,542,545,553,1],[918,533,537,544,550,1],[944,546,546,590,602,1],[996,602,602,629,629,1],[1022,618,618,628,628,0],[1077,610,610,622,622,1],[1104,618,621,626,630,1],[1130,618,622,628,630,0],[1156,604,616,618,622,1],[1182,603,617,619,621,1],[1208,612,617,626,626,1],[1235,629,629,653,653,1],[1261,655,660,672,676,1],[1287,649,649,667,667,0],[1313,647,647,650,665,1],[1339,633,645,652,652,0],[1366,630,634,646,646,0],[1394,615,619,631,631,0],[1420,593,593,619,628,0],[1446,595,597,606,608,1],[1472,610,610,632,632,1],[1498,625,631,633,640,1],[1524,617,632,634,634,1],[1551,614,614,631,631,0]];
  var B2 = [[10,613,613,631,631,0],[40,616,616,636,638,1],[70,614,619,634,634,0],[100,616,616,622,625,1],[130,628,628,634,643,1],[160,620,636,638,645,1],[193,636,642,650,653,1],[223,648,652,668,668,1],[253,645,658,664,668,0],[283,625,638,658,658,0],[313,624,630,632,640,1],[343,606,613,634,634,0],[373,605,611,614,616,1],[403,596,596,619,619,0],[433,590,598,621,623,1],[463,603,624,626,628,1],[493,631,631,659,659,1],[523,635,635,661,661,0],[556,628,635,650,652,1],[586,655,670,705,705,1],[616,693,699,706,712,0],[646,650,662,694,694,0],[676,658,659,665,665,1],[706,642,660,664,666,1],[736,663,669,672,690,1],[766,664,671,673,690,1],[796,650,679,681,681,1],[826,682,682,688,699,0],[856,682,685,710,710,1],[886,703,712,722,722,1],[916,721,721,737,765,1],[949,739,739,767,767,1],[979,738,754,764,782,0],[1009,748,757,774,774,1],[1039,688,688,775,775,1],[1069,720,720,778,778,0],[1099,693,706,718,718,0],[1129,703,704,706,722,1],[1159,706,706,713,715,1],[1189,702,708,714,722,1],[1219,710,714,720,725,1],[1249,722,724,731,737,1],[1279,733,737,754,757,1],[1309,745,748,760,760,0],[1342,690,697,745,745,0],[1372,678,688,701,705,0],[1402,687,690,705,716,1],[1432,690,705,711,718,1],[1462,660,673,709,709,0],[1492,646,646,674,674,0]];
  var B3 = [[22,1080,1088,1092,1100,1],[51,1090,1100,1102,1107,1],[81,1106,1106,1122,1125,1],[111,1104,1104,1127,1143,0],[140,1087,1087,1108,1108,0],[170,1082,1090,1095,1097,1],[202,1062,1062,1094,1094,0],[232,1054,1062,1068,1071,1],[261,1052,1060,1068,1083,0],[291,1060,1060,1085,1088,1],[321,1035,1057,1084,1084,0],[350,1025,1042,1047,1060,1],[380,1025,1025,1045,1045,0],[409,1008,1024,1041,1048,1],[439,1042,1044,1048,1070,1],[469,1054,1054,1086,1086,1],[498,1090,1095,1118,1118,1],[528,1122,1126,1142,1142,1],[558,1140,1150,1161,1170,1],[590,1127,1127,1156,1166,0],[620,1116,1123,1130,1134,1],[649,1124,1124,1142,1148,0],[679,1050,1057,1128,1136,0],[708,1003,1009,1048,1048,0],[738,978,991,1006,1013,0],[768,985,990,995,1010,1],[797,990,996,1010,1010,1],[827,1002,1012,1016,1016,1],[857,958,973,1001,1001,0],[886,962,965,970,977,1],[914,940,950,968,968,0],[948,930,945,971,973,1],[978,955,970,980,988,0],[1007,958,963,975,983,1],[1037,965,972,976,982,1],[1067,945,955,960,965,1],[1096,950,958,972,974,1],[1125,950,950,977,977,0],[1155,934,934,944,954,0],[1184,900,923,934,934,0],[1214,911,923,929,931,0],[1243,904,904,919,919,0],[1273,893,893,903,905,0]];

  var UP = [[[50,372],[80,318],[110,285],[140,260],[165,250],[205,237],[230,235],[275,238],[315,233],[340,214],[365,213],[418,232],[440,222],[500,213],[548,202],[570,208],[620,226],[650,230],[680,208],[735,192],[775,182],[842,182],[875,195],[940,206],[970,230],[1010,215],[1050,205],[1090,220],[1130,234],[1180,238],[1208,270],[1240,283],[1280,320],[1340,385],[1380,440],[1420,480],[1445,487],[1470,478],[1500,450],[1530,380],[1568,340]],
    [[60,318],[100,300],[150,295],[180,292],[265,291],[310,286],[340,292],[370,305],[400,308],[430,320],[460,323],[510,310],[570,306],[660,311],[700,319],[780,320],[830,324],[870,345],[910,378],[940,395],[970,403],[1000,425],[1040,448],[1090,437],[1130,432],[1180,424],[1310,421],[1345,405],[1370,400],[1400,406],[1430,388],[1465,320],[1500,262]],
    [[40,650],[100,615],[150,595],[200,575],[270,553],[330,553],[380,562],[420,585],[465,602],[500,630],[530,632],[555,622],[590,634],[620,634],[650,600],[680,550],[710,445],[740,370],[770,300],[800,260],[855,190],[905,155],[950,120],[990,102],[1060,92],[1120,102],[1150,125],[1185,160],[1215,193],[1240,190],[1270,175]]];
  var MID = [[[50,592],[80,568],[120,540],[170,525],[230,508],[280,498],[330,470],[400,428],[460,436],[520,435],[600,433],[640,440],[740,424],[810,398],[870,405],[930,408],[975,400],[1050,408],[1100,440],[1180,463],[1250,500],[1310,530],[1370,553],[1420,563],[1450,566],[1500,552],[1540,527],[1568,520]],
    [[50,507],[130,490],[220,476],[280,455],[380,425],[440,412],[500,413],[560,422],[600,450],[660,475],[730,488],[840,515],[900,530],[1000,552],[1060,553],[1170,547],[1310,528],[1370,508],[1450,475],[1500,448]],
    [[50,870],[170,825],[260,798],[350,748],[430,718],[480,707],[540,706],[590,719],[640,713],[680,700],[750,650],[800,620],[880,568],[960,530],[1040,483],[1090,450],[1140,395],[1180,362],[1230,332],[1265,315]]];
  var LOW = [[[50,812],[100,820],[160,808],[230,785],[280,762],[340,715],[385,635],[418,622],[445,645],[500,655],[560,652],[640,652],[690,657],[760,650],[790,635],[815,617],[900,615],[940,607],[975,575],[1010,590],[1045,615],[1090,650],[1150,672],[1185,690],[1210,688],[1250,705],[1310,706],[1370,690],[1410,650],[1440,643],[1470,650],[1510,670],[1530,695],[1568,700]],
    [[50,697],[130,688],[200,667],[270,635],[350,570],[430,505],[465,503],[490,520],[550,525],[590,565],[680,625],[770,670],[820,700],[890,699],[930,685],[975,680],[1015,660],[1070,658],[1100,665],[1160,665],[1250,640],[1340,627],[1380,605],[1410,585],[1430,583],[1470,610],[1500,635]],
    [[50,1093],[130,1072],[200,1056],[260,1035],[320,985],[370,930],[410,870],[460,825],[495,785],[530,782],[560,800],[620,800],[650,818],[680,845],[710,905],[740,945],[790,975],[830,970],[880,968],[960,935],[1010,905],[1060,850],[1100,790],[1130,730],[1160,640],[1190,560],[1215,500],[1240,472],[1270,453]]];

  function line(sections, color, w) {
    var last = -1, pts = [];
    sections.forEach(function (s) {
      s.pts.forEach(function (p) {
        var x = s.fx(p[0]), y = s.fy(p[1]);
        if (x > last) { pts.push(x.toFixed(1) + ',' + y.toFixed(1)); last = x; }
      });
    });
    return '<polyline points="' + pts.join(' ') + '" fill="none" stroke="' + color + '" stroke-width="' + (w || 1.1) + '"/>';
  }
  function three(a, color) {
    return line([{ pts: a[0], fx: X7, fy: Y7 }, { pts: a[1], fx: X8, fy: Y7 }, { pts: a[2], fx: X9, fy: Y9 }], color);
  }
  function grid(y, x2) {
    return '<line x1="47" x2="' + (x2 || 1566) + '" y1="' + y + '" y2="' + y + '" stroke="#4e4e4e" stroke-dasharray="1 6"/>';
  }
  function axisText(y, t, cls) {
    return '<text class="' + cls + '" x="1633" y="' + y + '">' + t + '</text>';
  }
  function wick(x, y1, y2, col) {
    return '<line x1="' + x + '" x2="' + x + '" y1="' + y1 + '" y2="' + y2 + '" stroke="' + col + '"/>';
  }
  function candle(c, fx, fy, blue) {
    var x = Math.round(fx(c[0])) + 0.5, hi = fy(c[1]), t = fy(c[2]), b = fy(c[3]), lo = fy(c[4]);
    var col = blue ? BL : (c[5] ? RED : CY);
    var solid = blue ? c[5] : !c[5];
    var s = '';
    if (t > hi) s += wick(x, hi, t, col);
    if (lo > b) s += wick(x, b, lo, col);
    var h = Math.max(b - t, 1);
    if (solid) s += '<rect x="' + (x - 3.5) + '" y="' + t.toFixed(1) + '" width="7" height="' + h.toFixed(1) + '" fill="' + col + '"/>';
    else s += '<rect x="' + (x - 3) + '" y="' + t.toFixed(1) + '" width="6" height="' + h.toFixed(1) + '" fill="none" stroke="' + col + '"/>';
    return s;
  }

  /* main chart */
  var m = '';
  m += '<line x1="47" x2="1553" y1="128" y2="128" stroke="#222"/>';
  for (var k = 0; k <= 12; k++) m += grid(162.7 + 30.93 * k);
  m += '<line x1="44" x2="1566" y1="182.3" y2="182.3" stroke="#e0b000" stroke-dasharray="5 3"/>';
  m += '<line x1="1566.5" x2="1566.5" y1="99" y2="577" stroke="#2b2b2b"/>';
  m += '<line x1="1639.5" x2="1639.5" y1="99" y2="885" stroke="#2b2b2b"/>';
  B1.forEach(function (c) { m += candle(c, X7, Y7, true); });
  B2.forEach(function (c) { m += candle(c, X8, Y7, true); });
  B3.forEach(function (c) { m += candle(c, X9, Y9, true); });
  C1.forEach(function (c) { m += candle(c, X7, Y7); });
  C2.forEach(function (c) { m += candle(c, X8, Y7); });
  C3.forEach(function (c) { m += candle(c, X9, Y9); });
  m += three(UP, YE) + three(MID, WH) + three(LOW, MA);

  /* event stars along the top of the plot */
  var stars = '';
  [113,121,155,172,221,263,296,304,327,372,410,427,484,517,550,616,698,754,781,796,806,847,862,878,892,930,945,986,994,1102,1194,1202,1230].forEach(function (s) {
    var x = (s * 1.2245).toFixed(1), y = 139;
    stars += 'M' + (x - 5) + ' ' + y + 'h10M' + x + ' ' + (y - 5) + 'v10M' + (x - 3.6) + ' ' + (y - 3.6) + 'l7.2 7.2M' + (x - 3.6) + ' ' + (y + 3.6) + 'l7.2-7.2';
    m += '<circle cx="' + x + '" cy="' + y + '" r="2.600" fill="#cfcfcf"/>';
  });
  m += '<path d="' + stars + '" stroke="#cfcfcf" stroke-width="1.300"/>';

  function td(x, y, t, c) {
    return '<text class="td' + (c ? ' td-' + c : '') + '" x="' + x.toFixed(1) + '" y="' + (y + 5.5).toFixed(1) + '">' + t + '</text>';
  }
  [[50,214,7],[77,185,8],[101,254,9,'g'],[840,432,1],[866,436,2],[892,447,3],[918,495,4],[944,587,5],[970,590,6],[996,660,7],[1022,668,8],[1051,658,9,'r'],[1339,532,1],[1366,485,2],[1394,485,3],[1420,432,4],[1446,372,5],[1472,388,6],[1498,358,7],[1524,268,8],[1551,270,9,'g']].forEach(function (d) {
    m += td(X7(d[0]), Y7(d[1]), d[2], d[3]);
  });
  [[373,500,1],[403,510,2],[433,503,3],[463,515,4],[493,597,5],[523,604,6],[556,540,7],[586,660,8],[616,656,9,'r'],[856,452,1],[886,488,2],[916,461,3],[949,440,4],[979,452,5],[1009,410,6],[1039,325,7],[1069,380,8],[1099,382,9,'g'],[1342,368,1],[1372,374,2],[1402,328,3],[1432,285,4],[1462,220,5],[1492,130,6]].forEach(function (d) {
    m += td(X8(d[0]), Y7(d[1]), d[2], d[3]);
  });
  [[22,543,7],[51,607,8],[81,622,9,'g'],[1125,232,1],[1155,197,2],[1184,187,3],[1214,150,4],[1243,118,5],[1273,68,6]].forEach(function (d) {
    m += td(X9(d[0]), Y9(d[1]), d[2], d[3]);
  });

  m += '<defs><linearGradient id="ga" x1="0" x2="0" y1="0" y2="1"><stop offset="0" stop-color="#1e90f0" stop-opacity="0"/><stop offset=".6" stop-color="#1e90f0"/><stop offset="1" stop-color="#2aa0ff"/></linearGradient>' +
    '<linearGradient id="gb" x1="0" x2="0" y1="1" y2="0"><stop offset="0" stop-color="#1e90f0" stop-opacity="0"/><stop offset=".6" stop-color="#1e90f0"/><stop offset="1" stop-color="#2aa0ff"/></linearGradient></defs>';
  m += '<path d="M581 287l3 103 6 1-9 14-9-14 6-1z" fill="url(#ga)"/>';
  m += '<path d="M1550 338l-3-118-7 0 10-14 10 14-7 0z" fill="url(#gb)"/>';
  m += '<text class="note" x="221" y="500">24.62</text><path d="M220 503l-14 5M206 508l5 1M206 508l4-3" stroke="#fff" fill="none"/>';
  m += '<text class="note" x="1488" y="182">40.86</text><path d="M1531 172l17-6M1548 166l-5-1M1548 166l-4 3" stroke="#fff" fill="none"/>';

  [[40,164],[35,195],[30,226],[25,257],[20,288],[15,319],[10,350],[5,381],[0,412],[-5,443],[-10,474],[-15,504],[-20,535]].forEach(function (a) {
    var v = a[0].toFixed(2);
    m += axisText(a[1] + 6, v, a[0] < 0 ? 'axis axis-g' : 'axis');
  });
  document.getElementById('chart-main').innerHTML = m;

  /* volume */
  var V1 = [118,-238,273,-280,-282,-279,-270,-285,250,-222,187,178,-238,-261,-171,-228,225,286,220,115,-255,-273,-276,-261,115,-162,256,267,-270,258,-232,268,-282,-262,-243,253,-231,-270,235,277,290,288,288,-282,287,-250,-232,-280,286,-291,289,-291,220,238,276,285,250,273,-276,-276,-306,-291,-297,-282,-305,288,274,-292,-282,-297,290,-279,-288,-262,268];
  var V2 = [-300,-255,-285,-281,277,-300,-285,-283,-300,283,208,-255,265,-255,-250,257,277,262,294,-288,297,-294,-303,298,-303,310,277,304,-292,247,226,145,-246,260,-258,-267,277,-291,281,-270,127,-245,253,264,253,-270,-260,-288,-276,-270,-285,253,235,202,198,112,202,-195,-265,-261,232,-212,-235,202,-255,-255,277,255,-282,238,255,270,232,271,250];
  var v = '';
  v += grid(607.7, 1566);
  function bar(x, top) {
    var col = top > 0 ? RED : CY, y = YS(Math.abs(top)), h = 677.7 - y;
    x = Math.round(x);
    if (top > 0) return '<rect x="' + (x - 2.5) + '" y="' + y.toFixed(1) + '" width="6" height="' + h.toFixed(1) + '" fill="none" stroke="' + col + '"/>';
    return '<rect x="' + (x - 3) + '" y="' + y.toFixed(1) + '" width="7" height="' + h.toFixed(1) + '" fill="' + col + '"/>';
  }
  V1.forEach(function (t, i) { v += bar(XA(97 + 19.63 * i), t); });
  V2.forEach(function (t, i) { v += bar(XB(10 + 18.47 * i), t); });
  function two(a, b, color, w) {
    return line([{ pts: a, fx: XA, fy: YS }, { pts: b, fx: XB, fy: YS }], color, w || 1);
  }
  v += two([[97,223],[120,223],[150,221],[175,235],[190,265],[215,278],[258,280],[290,250],[320,227],[372,208],[400,225],[435,235],[470,212],[510,230],[545,238],[590,215],[650,213],[680,250],[710,260],[770,262],[800,258],[850,250],[900,268],[950,285],[990,265],[1045,268],[1085,287],[1105,290],[1135,265],[1185,262],[1200,250],[1230,265],[1290,272],[1340,290],[1380,295],[1568,285]],
    [[50,275],[100,285],[180,290],[210,265],[270,250],[300,265],[360,265],[420,298],[500,300],[540,292],[580,255],[620,226],[660,232],[690,270],[730,277],[770,245],[830,230],[850,262],[930,275],[980,260],[1030,195],[1070,180],[1120,225],[1160,240],[1190,228],[1230,240],[1275,265],[1330,262],[1385,257]], YE);
  v += two([[97,257],[140,247],[200,247],[260,250],[330,250],[400,228],[470,212],[540,232],[600,222],[640,222],[680,238],[750,238],[800,255],[860,252],[920,264],[1000,265],[1100,280],[1130,268],[1200,268],[1300,270],[1370,285],[1568,282]],
    [[100,283],[180,285],[210,275],[290,262],[360,262],[420,282],[480,293],[520,297],[570,280],[650,252],[720,252],[770,245],[900,250],[940,268],[1000,262],[1060,228],[1130,212],[1190,212],[1230,240],[1280,248],[1340,255],[1385,258]], MA);
  v += '<line x1="1566.5" x2="1566.5" y1="577" y2="679" stroke="#2b2b2b"/>';
  v += axisText(614, '6.15', 'axis-k') + axisText(676, '0.00', 'axis-k');
  document.getElementById('chart-vol').innerHTML = v;

  /* KDJ */
  var K = grid(709.7, 1566) + grid(779.7, 1566);
  K += two([[97,464],[135,467],[180,505],[230,548],[272,568],[305,510],[355,496],[390,545],[440,552],[480,505],[510,488],[570,478],[610,495],[660,530],[710,545],[770,578],[830,590],[880,570],[950,548],[1060,527],[1120,483],[1160,472],[1220,457],[1260,465],[1300,500],[1360,562],[1420,517],[1465,540],[1490,532],[1540,570],[1568,560]],
    [[65,583],[100,568],[160,575],[200,530],[250,487],[290,484],[350,495],[420,535],[470,550],[510,498],[590,460],[640,478],[720,510],[740,530],[790,550],[850,555],[920,580],[950,568],[1020,485],[1070,467],[1130,468],[1180,500],[1220,540],[1270,550],[1310,505],[1385,472]], WH);
  K += two([[97,484],[150,475],[210,505],[270,545],[360,513],[440,543],[510,505],[600,490],[710,535],[770,565],[850,580],[960,555],[1050,540],[1130,500],[1200,473],[1260,465],[1320,495],[1395,537],[1480,530],[1540,552],[1568,552]],
    [[80,572],[160,575],[260,512],[320,490],[400,505],[480,538],[600,478],[640,475],[720,495],[780,528],[880,552],[950,572],[1040,505],[1110,473],[1170,480],[1280,538],[1385,490]], YE);
  K += two([[97,420],[140,460],[190,555],[240,612],[272,617],[310,465],[355,458],[395,585],[435,573],[480,460],[510,445],[550,470],[568,455],[610,495],[650,555],[665,552],[690,575],[710,575],[765,620],[820,610],[870,577],[905,545],[960,522],[985,548],[1030,525],[1045,508],[1060,507],[1095,465],[1125,433],[1150,445],[1190,432],[1222,430],[1260,470],[1300,540],[1360,632],[1420,498],[1440,510],[1460,558],[1480,530],[1520,590],[1540,605],[1568,565]],
    [[30,593],[65,605],[100,566],[150,575],[190,490],[210,485],[235,430],[250,424],[290,455],[310,482],[350,492],[410,565],[455,586],[470,570],[510,455],[530,462],[580,420],[640,475],[720,515],[740,565],[775,586],[825,555],[850,575],[870,573],[920,610],[950,575],[1000,432],[1015,418],[1090,440],[1130,465],[1180,530],[1220,596],[1250,575],[1272,583],[1310,505],[1365,430],[1385,437]], MA);
  K += '<line x1="1566.5" x2="1566.5" y1="679" y2="781" stroke="#2b2b2b"/>';
  K += axisText(717, '112.38', 'axis-k') + axisText(778, '-16.26', 'axis-k');
  document.getElementById('chart-kdj').innerHTML = K;

  /* MACD */
  var S1 = [780,778,790,798,812,834,850,860,885,900,885,858,855,854,888,918,920,920,905,870,858,850,850,848,840,846,848,855,856,860,865,870,885,895,905,915,930,938,935,930,920,905,900,895,895,890,885,882,875,868,865,858,856,843,830,815,805,798,800,810,815,835,838,850,855,858,862,862,860,864,858,856,866,864,862];
  var S2 = [890,905,912,915,893,890,890,895,888,890,862,860,855,846,846,840,840,832,828,830,832,840,850,855,860,860,856,845,845,835,815,795,795,797,808,820,830,840,842,855,860,860,862,864,862,870,878,888,895,905,912,905,890,862,838,800,775,766,787,785,792,812,830,843,855,860,875,878,888,880,874,870,862,860,851];
  var d = grid(811, 1566) + grid(882.7, 1566);
  function stick(x, t) {
    x = Math.round(x) + 0.5;
    var y1 = Math.min(YS(t), YS(862)), y2 = Math.max(YS(t), YS(862));
    return '<line x1="' + x + '" x2="' + x + '" y1="' + y1 + '" y2="' + y2 + '" stroke="' + (t <= 862 ? '#f05048' : '#20e0e8') + '"/>';
  }
  S1.forEach(function (t, i) { d += stick(XA(97 + 19.63 * i), t); });
  S2.forEach(function (t, i) { d += stick(XB(10 + 18.47 * i), t); });
  d += two([[97,800],[150,777],[210,795],[278,825],[350,803],[390,845],[440,862],[510,828],[570,818],[640,818],[710,825],[770,860],[860,905],[950,905],[1010,913],[1090,905],[1200,840],[1260,822],[1340,835],[1410,832],[1450,835],[1510,838],[1568,862]],
    [[70,898],[120,902],[165,913],[230,895],[300,878],[380,853],[470,860],[540,838],[620,783],[720,783],[830,795],[900,825],[960,845],[1010,815],[1060,740],[1130,725],[1200,742],[1275,765],[1385,747]], WH);
  d += two([[97,840],[200,802],[250,802],[300,810],[360,808],[450,838],[570,828],[700,822],[790,840],[890,880],[1010,902],[1085,907],[1180,880],[1280,843],[1400,838],[1500,838],[1568,848]],
    [[70,875],[200,903],[350,872],[500,857],[600,825],[720,793],[850,795],[970,825],[1030,815],[1150,748],[1250,748],[1330,758],[1385,754]], YE, 1.3);
  d += '<line x1="1566.5" x2="1566.5" y1="781" y2="885" stroke="#2b2b2b"/>';
  d += axisText(820, '1.99', 'axis-k') + axisText(881, '-1.06', 'axis-k');
  document.getElementById('chart-macd').innerHTML = d;

  /* month axis */
  var A = '';
  [[160,171,'05'],[362,374,'06'],[564,575,'07'],[774,787,'08'],[1006,1018,'09'],[1208,1221,'10'],[1379,1391,'11']].forEach(function (a) {
    A += '<line x1="' + a[0] + '.5" x2="' + a[0] + '.5" y1="885" y2="890" stroke="#444"/>';
    A += '<text class="month" x="' + a[1] + '" y="906">' + a[2] + '</text>';
  });
  document.getElementById('chart-axis').innerHTML = A;
})();
```
